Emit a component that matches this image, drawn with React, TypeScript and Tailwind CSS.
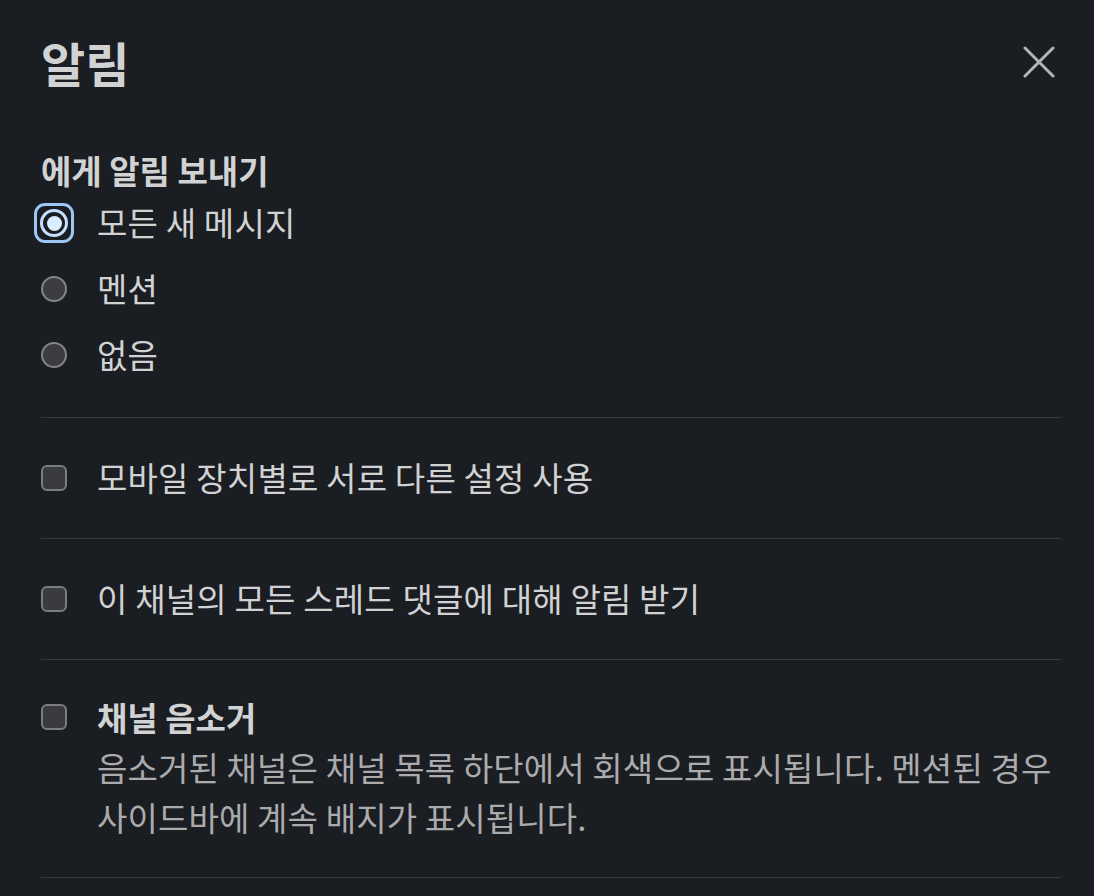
import React from 'react';

const font = { fontFamily: '"Noto Sans CJK KR", "Noto Sans", sans-serif' };

function Radio({ checked }: { checked?: boolean }) {
  if (checked) {
    return (
      <span className="w-[40px] h-[40px] shrink-0 rounded-[11px] border-[3px] border-[#9cc7f5] flex items-center justify-center -ml-[7px] -mr-[7px]">
        <span className="w-[28px] h-[28px] rounded-full border-[3px] border-[#c4dffd] flex items-center justify-center">
          <span className="w-[15px] h-[15px] rounded-full bg-[#dcecff]" />
        </span>
      </span>
    );
  }
  return <span className="w-[26px] h-[26px] shrink-0 rounded-full border-2 border-[#838486] bg-[#3b3c3f]" />;
}

function Checkbox() {
  return <span className="w-[26px] h-[26px] shrink-0 rounded-[6px] border-2 border-[#7b7c7f] bg-[#3a3b3e]" />;
}

function RadioRow({ label, checked }: { label: string; checked?: boolean }) {
  return (
    <div className="h-[66px] flex items-center">
      <div className="w-[26px] flex items-center justify-center">
        <Radio checked={checked} />
      </div>
      <span className="ml-[30px] text-[33px] tracking-[0.2px] text-[#d1d2d3]">{label}</span>
    </div>
  );
}

function CheckRow({ label }: { label: string }) {
  return (
    <div className="h-[121px] flex items-center border-b border-[#36383c]">
      <Checkbox />
      <span className="ml-[30px] text-[33px] tracking-[0.2px] text-[#d1d2d3]">{label}</span>
    </div>
  );
}

export default function App() {
  return (
    <div className="w-[1094px] h-[896px] bg-[#1a1d21] pl-[41px] pr-[33px] overflow-hidden" style={font}>
      {/* header */}
      <div className="h-[124px] flex items-center justify-between">
        <h1 className="text-[48px] font-bold text-[#d1d2d3] leading-none">알림</h1>
        <button className="w-[40px] h-[40px] flex items-center justify-center mr-[2px]">
          <svg width="32" height="32" viewBox="0 0 32 32" fill="none" stroke="#b4b5b8" strokeWidth="3" strokeLinecap="round">
            <path d="M2 2 L30 30 M30 2 L2 30" />
          </svg>
        </button>
      </div>

      {/* notify for */}
      <div className="pb-[29px] border-b border-[#36383c]">
        <h2 className="mt-[26px] text-[33px] font-bold text-[#d1d2d3] leading-[40px]">에게 알림 보내기</h2>
        <RadioRow label="모든 새 메시지" checked />
        <RadioRow label="멘션" />
        <RadioRow label="없음" />
      </div>

      <CheckRow label="모바일 장치별로 서로 다른 설정 사용" />
      <CheckRow label="이 채널의 모든 스레드 댓글에 대해 알림 받기" />

      {/* mute */}
      <div className="pt-[32px] pb-[35px] flex border-b border-[#36383c]">
        <div className="h-[50px] flex items-center">
          <Checkbox />
        </div>
        <div className="ml-[30px]">
          <div className="text-[33px] font-bold text-[#d1d2d3] leading-[50px]">채널 음소거</div>
          <p className="text-[33px] tracking-[0.15px] text-[#ababad] leading-[50px] whitespace-nowrap">
            음소거된 채널은 채널 목록 하단에서 회색으로 표시됩니다. 멘션된 경우
            <br />
            사이드바에 계속 배지가 표시됩니다.
          </p>
        </div>
      </div>
    </div>
  );
}
